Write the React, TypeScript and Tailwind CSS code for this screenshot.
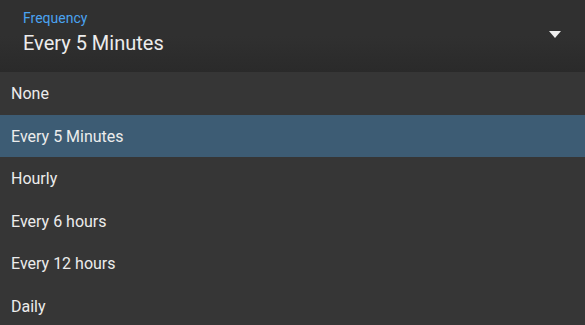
import React from 'react';

const options = ['None', 'Every 5 Minutes', 'Hourly', 'Every 6 hours', 'Every 12 hours', 'Daily'];

export default function App() {
  const selected = 'Every 5 Minutes';

  return (
    <div className="w-[585px] h-[325px] overflow-hidden bg-[#363636] font-['Roboto',sans-serif]">
      {/* Select field */}
      <div className="h-[72px] bg-gradient-to-b from-[#303030] via-[#303030] to-[#2a2a2a] flex items-start pl-[23px] pr-[24px]">
        <div className="flex-1 pt-[9px]">
          <div className="text-[14px] leading-[18px] text-[#4aa3f0]">Frequency</div>
          <div className="text-[20px] leading-[26px] mt-[3px] text-[#ececec]">{selected}</div>
        </div>
        <svg className="mt-[31px]" width="12" height="7" viewBox="0 0 12 7">
          <path d="M0 0h12L6 7z" fill="#eeeeee" />
        </svg>
      </div>

      {/* Menu */}
      <ul>
        {options.map((opt) => (
          <li
            key={opt}
            className={`h-[42.5px] flex items-center pl-[11px] pt-[2px] text-[16px] text-[#ececec] ${
              opt === selected ? 'bg-[#3d5c74]' : ''
            }`}
          >
            {opt}
          </li>
        ))}
      </ul>
    </div>
  );
}
